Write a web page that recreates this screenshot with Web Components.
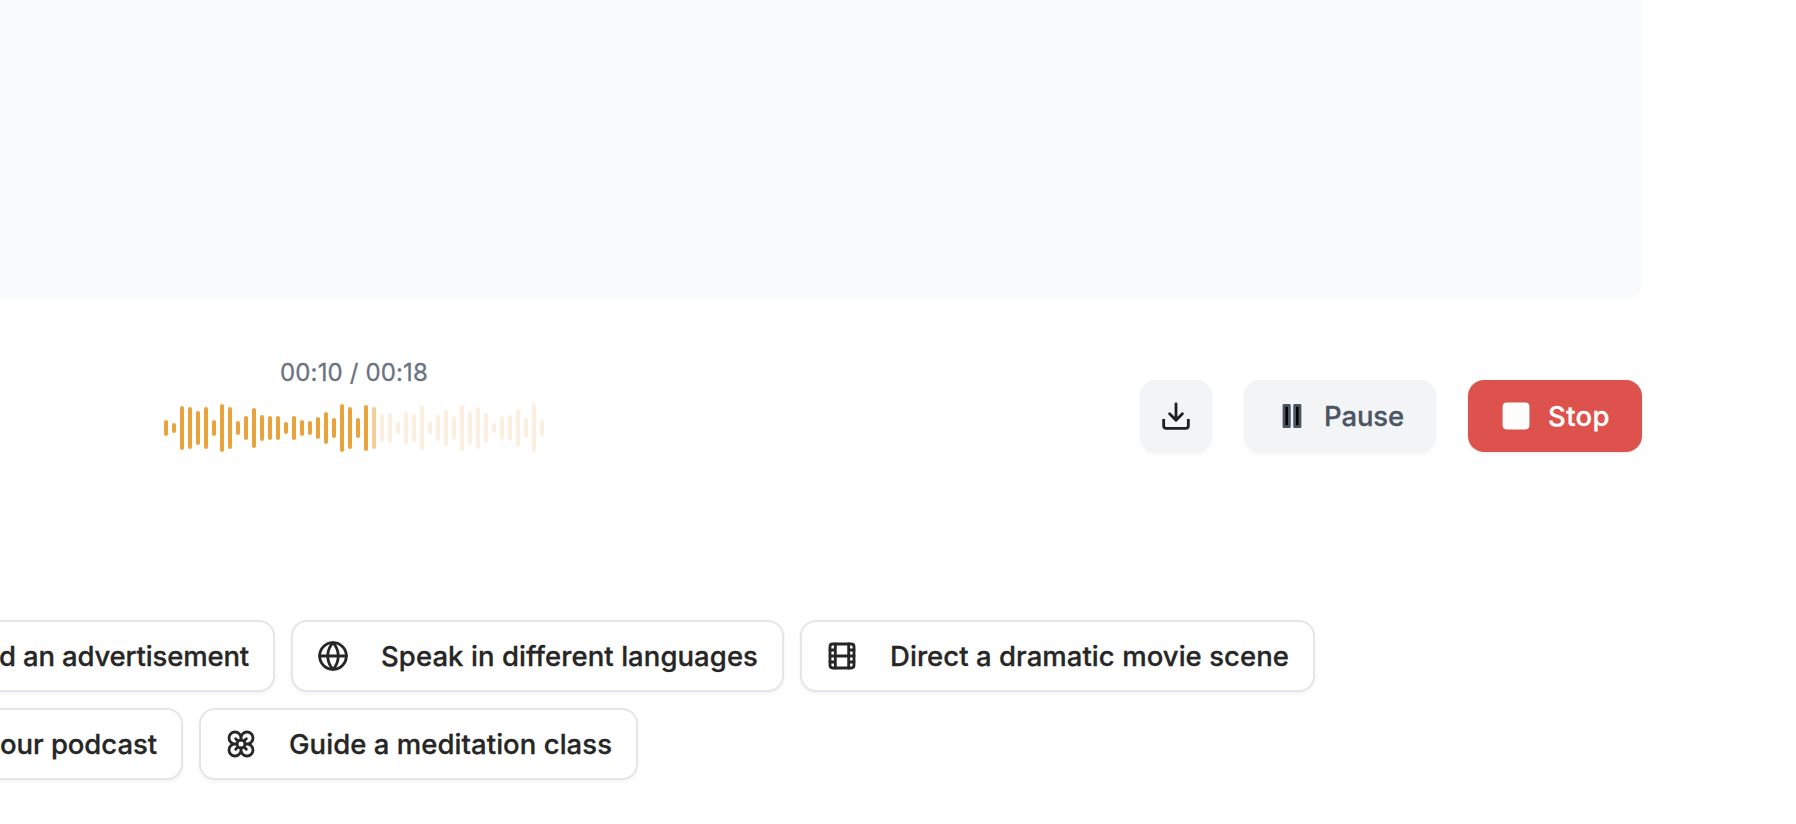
<!DOCTYPE html>
<html lang="en">
<head>
<meta charset="utf-8">
<title>Voice studio</title>
<style>
html, body { margin: 0; height: 100%; overflow: hidden; background: #fff; }
body { font-family: Inter, "Liberation Sans", sans-serif; color: #262626; }
</style>
</head>
<body>
<voice-studio></voice-studio>
<script>
const ICONS = {
  globe: '<circle cx="12" cy="12" r="10"/><path d="M2 12h20M12 2a15.3 15.3 0 0 1 4 10 15.3 15.3 0 0 1-4 10 15.3 15.3 0 0 1-4-10 15.3 15.3 0 0 1 4-10z"/>',
  film: '<rect x="3" y="3" width="18" height="18" rx="2"/><path d="M7 3v18M3 7.5h4M3 12h18M3 16.5h4M17 3v18M17 7.5h4M17 16.5h4"/>',
  flower: '<path d="M12 7.5a4.5 4.5 0 1 1 4.5 4.5M12 7.5A4.5 4.5 0 1 0 7.5 12M12 7.5V9m-4.5 3a4.5 4.5 0 1 0 4.5 4.5M7.5 12H9m7.5 0a4.5 4.5 0 1 1-4.5 4.5m4.5-4.5H15m-3 4.5V15"/><circle cx="12" cy="12" r="3"/><path d="m8 16 1.5-1.5M14.5 9.5 16 8M8 8l1.5 1.5M14.5 14.5 16 16"/>',
  download: '<path d="M12 3v12M7.2 10.4 12 15.2l4.8-4.8"/><path stroke-linecap="butt" d="M2.75 14.3v4.95a2 2 0 0 0 2 2h14.5a2 2 0 0 0 2-2V14.3"/>',
  pause: '<rect x="6" y="4" width="4" height="16" fill="#000"/><rect x="14" y="4" width="4" height="16" fill="#000"/>',
  stop: '<rect x="3" y="3" width="18" height="18" rx="2" fill="#fff"/>'
};

class UiIcon extends HTMLElement {
  connectedCallback() {
    this.attachShadow({ mode: 'open' }).innerHTML = `
      <style>:host{display:block;flex:none;width:32px;height:32px}svg{display:block;width:100%;height:100%}</style>
      <svg viewBox="0 0 24 24" fill="none" stroke="currentColor" stroke-width="2.12" stroke-linecap="round" stroke-linejoin="round">${ICONS[this.getAttribute('name')]}</svg>`;
  }
}
customElements.define('ui-icon', UiIcon);

/* One line of text whose tracking is adjusted so it fills the given width. */
class FitLabel extends HTMLElement {
  connectedCallback() {
    this.attachShadow({ mode: 'open' }).innerHTML = `
      <style>:host{display:block;flex:none;white-space:nowrap;-webkit-text-stroke:.3px currentColor}span{display:inline-block}</style>
      <span><slot></slot></span>`;
    const width = Number(this.getAttribute('width'));
    const span = this.shadowRoot.querySelector('span');
    this.style.width = width + 'px';
    const n = this.textContent.length;
    span.style.letterSpacing = (width - span.getBoundingClientRect().width) / n + 'px';
  }
}
customElements.define('fit-label', FitLabel);

class ActionButton extends HTMLElement {
  connectedCallback() {
    this.attachShadow({ mode: 'open' }).innerHTML = `
      <style>
        :host{display:block;flex:none;color:#4b5563}
        button{all:unset;box-sizing:border-box;display:flex;align-items:center;gap:16px;height:72px;padding:0 32px;
          border-radius:16px;background:#f3f4f6;box-shadow:0 2px 4px rgba(0,0,0,.05);font-size:27.5px;font-weight:500;line-height:40px}
        :host([kind=square]){color:#1f2024}
        :host([kind=square]) button{padding:0 20px}
        :host([kind=danger]){color:#fff}
        :host([kind=danger]) button{background:#dd524c}
      </style>
      <button><slot></slot></button>`;
  }
}
customElements.define('action-button', ActionButton);

class PromptChip extends HTMLElement {
  connectedCallback() {
    const icon = this.getAttribute('icon');
    this.attachShadow({ mode: 'open' }).innerHTML = `
      <style>
        :host{display:block;flex:none}
        div{box-sizing:border-box;display:flex;align-items:center;gap:32px;height:72px;padding:0 24px;
          border:2px solid #e5e5eb;border-radius:16px;background:#fff;box-shadow:0 2px 4px rgba(0,0,0,.05);
          font-size:27.5px;font-weight:500;line-height:40px}
      </style>
      <div>${icon ? `<ui-icon name="${icon}"></ui-icon>` : ''}<slot></slot></div>`;
  }
}
customElements.define('prompt-chip', PromptChip);

class WaveForm extends HTMLElement {
  connectedCallback() {
    const heights = [16,10,44,42,34,42,16,48,42,14,24,40,26,24,24,12,24,16,14,22,32,20,48,42,20,46,42,28,30,12,32,28,44,12,26,36,24,46,34,42,30,10,24,26,38,20,48,16];
    const bars = heights.map((h, i) => `<i class="${i < 26 ? 'done' : i === 26 ? 'now' : ''}" style="height:${h}px"></i>`).join('');
    this.attachShadow({ mode: 'open' }).innerHTML = `
      <style>
        :host{display:flex;align-items:center;gap:4px;height:48px}
        i{width:4px;border-radius:2px;background:#fdefdf}
        .done{background:#e8a33d}
        .now{background:#f4cd97}
      </style>${bars}`;
  }
}
customElements.define('wave-form', WaveForm);

class VoiceStudio extends HTMLElement {
  connectedCallback() {
    this.attachShadow({ mode: 'open' }).innerHTML = `
      <style>
        :host{display:block;width:1796px;height:824px;overflow:hidden}
        .panel{width:1642px;height:300px;background:#f9fafc;border-radius:0 0 16px 0}
        .player{display:flex;justify-content:space-between;box-sizing:border-box;width:1642px;padding:53px 0 0 164px;height:320px}
        .track{display:flex;flex-direction:column;align-items:center;width:380px}
        .time{font-size:24px;line-height:40px;color:#6b7280;margin-bottom:11px}
        .actions{display:flex;gap:32px;padding-top:27px}
        .row{display:flex;justify-content:flex-end;gap:16px;margin-bottom:16px}
        .first{width:1315px}
        .second{width:638px}
      </style>
      <div class="panel"></div>
      <div class="player">
        <div class="track">
          <fit-label class="time" width="148">00:10 / 00:18</fit-label>
          <wave-form></wave-form>
        </div>
        <div class="actions">
          <action-button kind="square"><ui-icon name="download"></ui-icon></action-button>
          <action-button><ui-icon name="pause"></ui-icon><fit-label width="80">Pause</fit-label></action-button>
          <action-button kind="danger"><ui-icon name="stop"></ui-icon><fit-label width="62">Stop</fit-label></action-button>
        </div>
      </div>
      <div class="row first">
        <prompt-chip><fit-label width="250">d an advertisement</fit-label></prompt-chip>
        <prompt-chip icon="globe"><fit-label width="377">Speak in different languages</fit-label></prompt-chip>
        <prompt-chip icon="film"><fit-label width="399">Direct a dramatic movie scene</fit-label></prompt-chip>
      </div>
      <div class="row second">
        <prompt-chip><fit-label width="157">our podcast</fit-label></prompt-chip>
        <prompt-chip icon="flower"><fit-label width="323">Guide a meditation class</fit-label></prompt-chip>
      </div>`;
  }
}
customElements.define('voice-studio', VoiceStudio);
</script>
</body>
</html>
